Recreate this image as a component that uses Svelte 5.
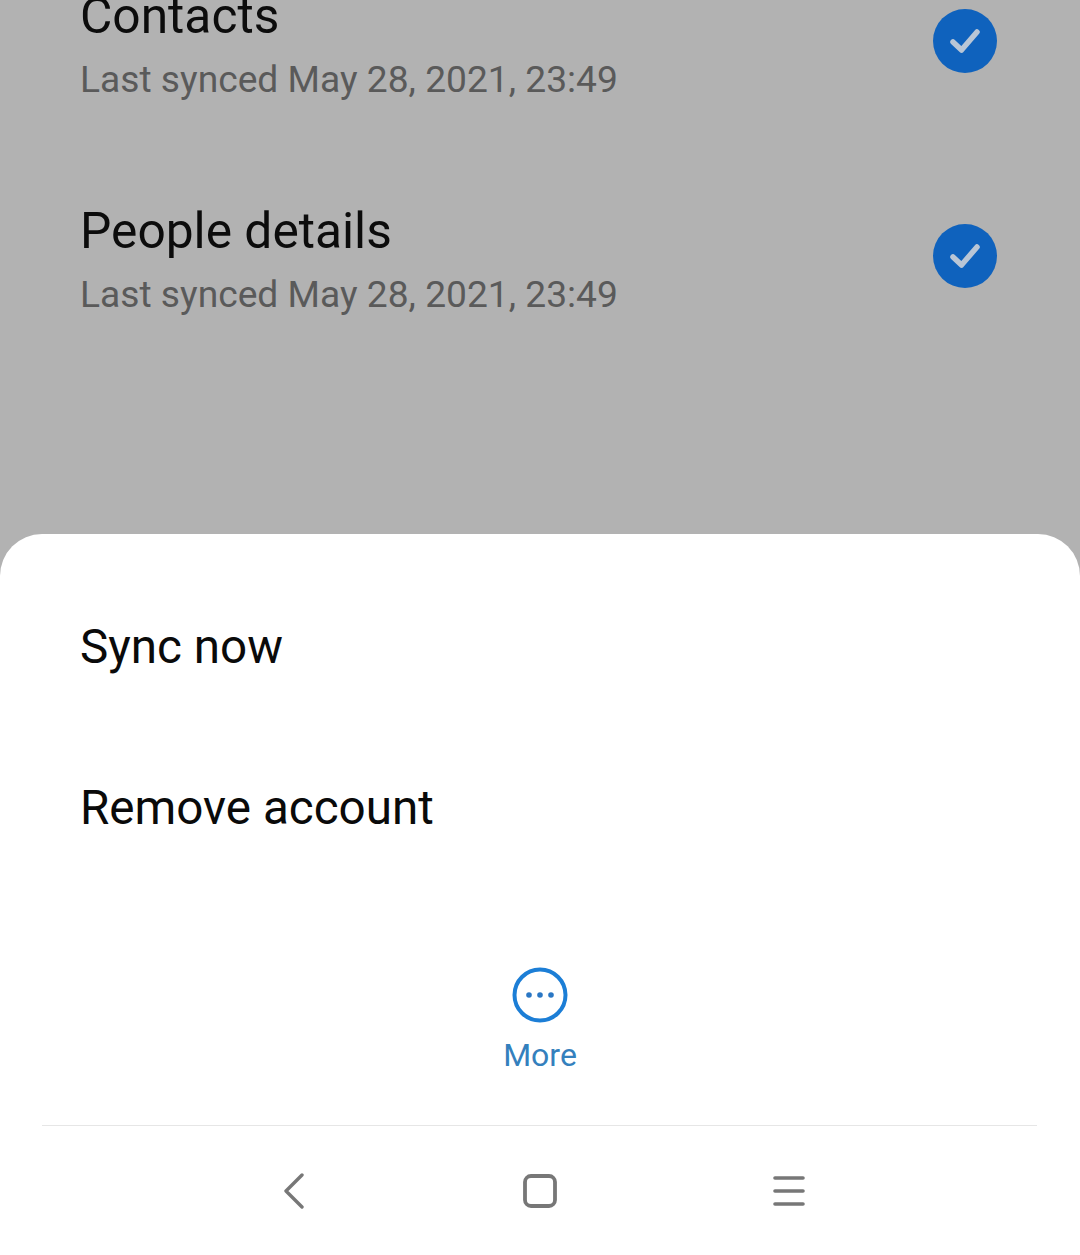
<script>
  const syncRows = [
    { name: "Contacts", synced: "Last synced May 28, 2021, 23:49" },
    { name: "People details", synced: "Last synced May 28, 2021, 23:49" }
  ];
  const actions = ["Sync now", "Remove account"];
</script>

<div class="screen">
  <div class="backdrop">
    <div class="sync-list">
      {#each syncRows as row}
        <div class="sync-row">
          <div class="sync-text">
            <div class="sync-name">{row.name}</div>
            <div class="sync-time">{row.synced}</div>
          </div>
          <svg class="check" width="64" height="64" viewBox="0 0 64 64" aria-hidden="true">
            <circle cx="32" cy="32" r="32" fill="#0f62bd" />
            <path d="M20 33 L28.500 41 L44 23" fill="none" stroke="#b9c6d6" stroke-width="5.500" stroke-linecap="round" stroke-linejoin="round" />
          </svg>
        </div>
      {/each}
    </div>
  </div>

  <div class="sheet">
    <div class="actions">
      {#each actions as action}
        <div class="action">{action}</div>
      {/each}
    </div>

    <div class="more">
      <svg width="56" height="56" viewBox="0 0 56 56" aria-hidden="true">
        <circle cx="28" cy="28" r="25.500" fill="none" stroke="#1c7ed6" stroke-width="4" />
        <circle cx="17" cy="28" r="2.800" fill="#2a77c4" />
        <circle cx="28" cy="28" r="2.800" fill="#2a77c4" />
        <circle cx="39" cy="28" r="2.800" fill="#2a77c4" />
      </svg>
      <span>More</span>
    </div>

    <div class="divider"></div>

    <div class="nav">
      <svg class="nav-back" width="22" height="36" viewBox="0 0 22 36" aria-hidden="true">
        <path d="M19 2 L3 18 L19 34" fill="none" stroke="#777" stroke-width="3.400" stroke-linecap="round" stroke-linejoin="round" />
      </svg>
      <svg width="34" height="34" viewBox="0 0 34 34" aria-hidden="true">
        <rect x="2" y="2" width="30" height="30" rx="6" fill="none" stroke="#777" stroke-width="3.800" />
      </svg>
      <svg class="nav-menu" width="32" height="32" viewBox="0 0 32 32" aria-hidden="true">
        <path d="M2 3 H30 M2 16 H30 M2 29 H30" fill="none" stroke="#777" stroke-width="3.600" stroke-linecap="round" />
      </svg>
    </div>
  </div>
</div>

<style>
  :global(body) {
    margin: 0;
    background: #fff;
  }

  .screen {
    display: flex;
    flex-direction: column;
    width: 1080px;
    height: 1255px;
    overflow: hidden;
    font-family: Roboto, "Liberation Sans", sans-serif;
    background: #b2b2b2;
  }

  .backdrop {
    height: 534px;
    flex: none;
    overflow: hidden;
  }

  .sync-list {
    display: flex;
    flex-direction: column;
    gap: 87px;
    margin-top: -23px;
    padding: 0 83px 0 81px;
  }

  .sync-row {
    display: flex;
    align-items: center;
    justify-content: space-between;
    height: 128px;
  }

  .sync-text {
    padding-top: 12px;
  }

  .sync-name {
    margin-left: -1px;
    font-size: 49.700px;
    line-height: 66px;
    margin-bottom: -2px;
    color: #0c0c0c;
  }

  .sync-time {
    margin-left: -1px;
    font-size: 37.200px;
    line-height: 64px;
    color: #5a5a5a;
  }

  .check {
    flex: none;
  }

  .sheet {
    flex: 1;
    display: flex;
    flex-direction: column;
    background: #fff;
    border-radius: 42px 42px 0 0;
  }

  .actions {
    display: flex;
    flex-direction: column;
    padding: 33px 80px 0;
  }

  .action {
    height: 161px;
    line-height: 161px;
    font-size: 47.600px;
    color: #0a0a0a;
  }

  .more {
    display: flex;
    flex-direction: column;
    align-items: center;
    gap: 10px;
    margin-top: 78px;
    color: #3480bd;
    font-size: 32px;
    line-height: 44px;
  }

  .divider {
    height: 1px;
    margin: 48px 43px 0 42px;
    background: #e6e6e6;
  }

  .nav {
    display: grid;
    grid-template-columns: repeat(3, 250px);
    justify-content: center;
    justify-items: center;
    align-items: center;
    height: 129px;
  }

  .nav-back {
    margin-left: 8px;
  }

  .nav-menu {
    margin-right: 2px;
  }
</style>
